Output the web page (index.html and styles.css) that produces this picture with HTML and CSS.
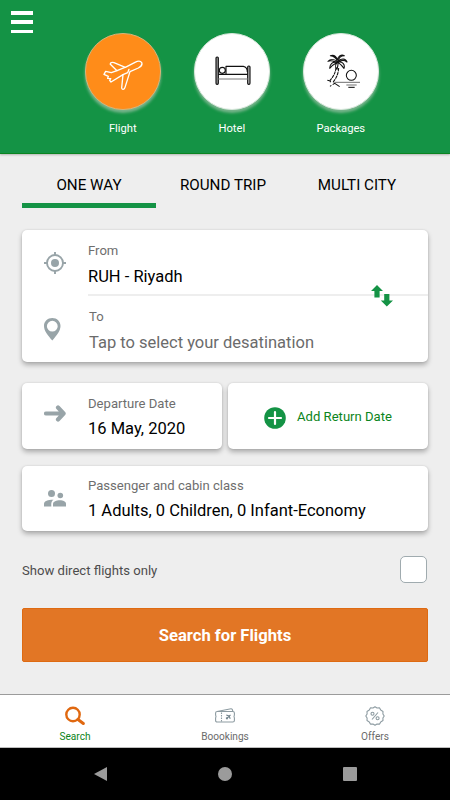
FILE: index.html
```
<!DOCTYPE html>
<html lang="en">
<head>
    <meta charset="UTF-8">
    <meta name="viewport" content="width=device-width, initial-scale=1.0">
    <title>Flight Search</title>
    <link rel="stylesheet" href="styles.css">
</head>
<body>

    <!-- Header with the product types -->
    <header class="header">
        <button class="menu-btn" aria-label="Menu">
            <span></span>
            <span></span>
            <span></span>
        </button>
        <nav class="products">
            <a class="product active">
                <span class="circle">
                    <svg width="40" height="31" viewBox="0 0 120 93" fill="none" stroke="#fff" stroke-width="4" stroke-linejoin="round" stroke-linecap="round">
                        <path d="M96 7 C104 3 113 3 116 8 C119 14 113 20 106 24 L81 35 L66 82 C64 89 57 90 56 84 L60 44 L24 66 L20 61 L23 56 L14 55 L16 49 L3 43 L8 34 L25 38 L42 32 L22 13 C21 8 27 6 33 8 L67 22 Z"/>
                        <path d="M42 32 L66 22 M60 44 L74 38 L78 28"/>
                    </svg>
                </span>
                <span class="product-name">Flight</span>
            </a>
            <a class="product">
                <span class="circle">
                    <svg class="bed" width="36" height="30" viewBox="0 0 108 90" fill="none" stroke="#111" stroke-width="3.4" stroke-linejoin="round">
                        <rect x="3" y="3" width="7" height="82" rx="3" fill="#999"/>
                        <rect x="98" y="30" width="7" height="55" rx="3" fill="#bbb"/>
                        <circle cx="22" cy="43" r="9"/>
                        <path d="M10 55 H98 M33 55 V31 H85 Q97 33 97 48"/>
                        <path d="M10 69 H98" stroke="#888"/>
                    </svg>
                </span>
                <span class="product-name">Hotel</span>
            </a>
            <a class="product">
                <span class="circle">
                    <svg class="palm" width="34" height="34" viewBox="0 0 102 102" fill="none" stroke="#111" stroke-width="3.2" stroke-linejoin="round">
                        <path d="M32 23 C22 15 10 14 3 22 C13 17 20 22 30 25 C17 22 8 31 8 43 C15 35 22 30 31 25 C24 32 25 41 30 46 C32 38 34 32 33 25 C42 31 46 36 51 43 C55 31 45 22 35 24 C45 17 53 18 60 24 C56 12 43 13 34 21 C35 11 42 5 52 5 C43 0 33 6 31 18 C28 8 20 2 10 5 C20 6 28 12 32 23 Z"/>
                        <path d="M27 40 C26 56 19 68 9 79 M35 42 C34 59 28 73 17 86" stroke-dasharray="10 2"/>
                        <path d="M1 79 L11 81 L9 85 M20 86 L38 98 M9 97 L13 94 M17 92 L22 89"/>
                        <circle cx="73" cy="64" r="15"/>
                        <path d="M24 85 H99" stroke="#777"/>
                        <path d="M58 93 H89" stroke="#777"/>
                        <path d="M64 100 H83"/>
                    </svg>
                </span>
                <span class="product-name">Packages</span>
            </a>
        </nav>
    </header>

    <main class="content">
        <!-- Trip type tabs -->
        <div class="tabs">
            <div class="tab active">ONE WAY</div>
            <div class="tab">ROUND TRIP</div>
            <div class="tab">MULTI CITY</div>
        </div>

        <!-- From / To -->
        <div class="card route">
            <div class="field">
                <div class="icon target">
                    <svg width="22" height="22" viewBox="0 0 22 22" fill="none" stroke="#98a4a8" stroke-width="1.9">
                        <circle cx="11" cy="11" r="8"/>
                        <circle cx="11" cy="11" r="4" fill="#98a4a8" stroke="none"/>
                        <path d="M11 0 V3 M11 19 V22 M0 11 H3 M19 11 H22"/>
                    </svg>
                </div>
                <div class="field-text">
                    <div class="label">From</div>
                    <div class="value">RUH - Riyadh</div>
                </div>
            </div>
            <div class="divider"></div>
            <div class="field to">
                <div class="icon">
                    <svg width="17" height="23" viewBox="0 0 17 23">
                        <path fill="#98a4a8" fill-rule="evenodd" d="M8.3 0 C3.6 0 0 3.5 0 8 C0 13 4 17.5 8.3 22.5 C12.6 17.5 16.5 13 16.5 8 C16.5 3.5 13 0 8.3 0 Z M8.3 2.8 A5.4 5.4 0 1 1 8.3 13.6 A5.4 5.4 0 1 1 8.3 2.8 Z"/>
                    </svg>
                </div>
                <div class="field-text">
                    <div class="label">To</div>
                    <div class="value placeholder">Tap to select your desatination</div>
                </div>
            </div>
            <button class="swap" aria-label="Swap">
                <svg width="22" height="22" viewBox="0 0 22 22" fill="#149345">
                    <path d="M6 0 L12 6 H8.6 V12.5 H3.4 V6 H0 Z"/>
                    <path d="M13.2 9 H18.4 V15.5 H22 L15.8 21.5 L9.8 15.5 H13.2 Z"/>
                </svg>
            </button>
        </div>

        <!-- Dates -->
        <div class="dates">
            <div class="card">
                <div class="field">
                    <div class="icon arrow">
                        <svg width="22" height="17" viewBox="0 0 22 17" fill="none" stroke="#98a4a8" stroke-width="4.2" stroke-linecap="round" stroke-linejoin="round">
                            <path d="M2 8.5 H18 M14 2.5 L19.6 8.5 L14 14.5"/>
                        </svg>
                    </div>
                    <div class="field-text">
                        <div class="label">Departure Date</div>
                        <div class="value">16 May, 2020</div>
                    </div>
                </div>
            </div>
            <div class="card add-return">
                <svg width="22" height="22" viewBox="0 0 22 22">
                    <circle cx="11" cy="11" r="10.8" fill="#149345"/>
                    <path d="M11 5 V17 M5 11 H17" stroke="#fff" stroke-width="2.2" stroke-linecap="round"/>
                </svg>
                <span>Add Return Date</span>
            </div>
        </div>

        <!-- Passengers -->
        <div class="card passengers">
            <div class="field">
                <div class="icon">
                    <svg width="22" height="17" viewBox="0 0 22 17" fill="#98a4a8">
                        <circle cx="7.5" cy="3.5" r="3.5"/>
                        <circle cx="16.3" cy="5.5" r="2.8"/>
                        <path d="M0 16.5 V14 C0 11 4.5 9.7 9.5 9.8 C7.5 11.2 7 12.8 7.3 16.5 Z"/>
                        <path d="M9 16.5 V14 C9 11.5 12.5 10.3 15.8 10.3 C19.2 10.3 22 11.6 22 14 V16.5 Z"/>
                    </svg>
                </div>
                <div class="field-text">
                    <div class="label">Passenger and cabin class</div>
                    <div class="value">1 Adults, 0 Children, 0 Infant-Economy</div>
                </div>
            </div>
        </div>

        <label class="direct">
            <span>Show direct flights only</span>
            <input type="checkbox">
        </label>

        <button class="search-btn">Search for Flights</button>
    </main>

    <!-- Bottom tab bar -->
    <nav class="bottom-nav">
        <a class="nav-item active">
            <svg width="20" height="20" viewBox="0 0 20 20" fill="none" stroke="#e06810" stroke-linecap="round">
                <circle cx="8" cy="8.5" r="6.7" stroke-width="2.4"/>
                <path d="M13 13.5 L18.3 17.5" stroke-width="3"/>
            </svg>
            <span>Search</span>
        </a>
        <a class="nav-item">
            <svg width="20" height="20" viewBox="0 0 20 20" fill="none" stroke="#8d9ba1" stroke-width="1.1" stroke-linejoin="round">
                <path d="M2 5.5 L16 2.8 Q17.5 2.6 17.8 5.5"/>
                <path d="M2.2 5.5 H17.8 Q19.4 5.5 19.4 7 V9 Q18.6 10.5 19.4 12 V14.5 Q19.4 16 17.8 16 H2.2 Q.6 16 .6 14.5 V12 Q1.4 10.5 .6 9 V7 Q.6 5.5 2.2 5.5 Z"/>
                <path d="M6.5 6.5 V15.5" stroke-dasharray="1.5 1"/>
                <path d="M11.3 13 L15.5 8.8 M11.3 9 L14.2 10.1 L15.2 12.8 M11 11.6 L12.6 13.2" stroke="#6d7f88"/>
            </svg>
            <span>Boookings</span>
        </a>
        <a class="nav-item">
            <svg width="20" height="20" viewBox="0 0 20 20" fill="none" stroke="#8d9ba1" stroke-width="1.1" stroke-linejoin="round">
                <path d="M10 .8 L12 2 L14.6 1.9 L15.7 4.1 L18 5.4 L17.9 8 L19.2 10 L17.9 12 L18 14.6 L15.7 15.9 L14.6 18.1 L12 18 L10 19.2 L8 18 L5.4 18.1 L4.3 15.9 L2 14.6 L2.1 12 L.8 10 L2.1 8 L2 5.4 L4.3 4.1 L5.4 1.9 L8 2 Z"/>
                <circle cx="7.5" cy="7.7" r="1.5"/>
                <circle cx="12.6" cy="12.3" r="1.5"/>
                <path d="M13 6.5 L7 13.5"/>
            </svg>
            <span>Offers</span>
        </a>
    </nav>

    <!-- System buttons -->
    <div class="system-bar">
        <span><i class="back"></i></span>
        <span><i class="home"></i></span>
        <span><i class="recent"></i></span>
    </div>

</body>
</html>
```

FILE: styles.css
```
* {
    box-sizing: border-box;
}
body {
    font-family: Roboto, 'Liberation Sans', sans-serif;
    margin: 0;
    height: 800px;
    display: flex;
    flex-direction: column;
    background-color: #eeeeee;
    color: #000;
    overflow: hidden;
}
button {
    font-family: inherit;
    border: none;
    padding: 0;
    cursor: pointer;
}
svg {
    display: block;
    flex: none;
}

/* Header */
.header {
    height: 154px;
    flex: none;
    display: flex;
    background-color: #149345;
    border-bottom: 1px solid #0b8420;
    box-shadow: 0 1px 2px rgba(0, 0, 0, 0.25);
}
.menu-btn {
    background: none;
    width: 22px;
    height: 22px;
    margin: 11px 35.3px 0 11px;
    display: flex;
    flex-direction: column;
    justify-content: space-between;
}
.menu-btn span {
    width: 22px;
    height: 3.5px;
    background-color: white;
}
.products {
    display: flex;
    padding-top: 33px;
}
.product {
    width: 109px;
    display: flex;
    flex-direction: column;
    align-items: center;
    color: white;
}
.circle {
    width: 76.5px;
    height: 76.5px;
    border-radius: 50%;
    background-color: white;
    border: 1px solid #d8e8dc;
    box-shadow: 0 3px 3px rgba(175, 200, 180, 0.65);
    display: flex;
    align-items: center;
    justify-content: center;
}
.product.active .circle {
    background-color: #ff8c19;
    border-color: #d5b57b;
    padding-top: 8px;
}
.product .bed {
    margin-left: 3px;
}
.product .palm {
    margin: -1px 0 0 7px;
}
.product-name {
    font-size: 11.2px;
    line-height: 14px;
    margin-top: 12px;
}

/* Trip type tabs */
.content {
    flex: 1;
    padding: 13px 22px 0;
}
.tabs {
    display: flex;
    margin-bottom: 22px;
}
.tab {
    width: 134px;
    height: 41px;
    padding-top: 8px;
    line-height: 20px;
    font-size: 15.2px;
    text-align: center;
    border-bottom: 5px solid transparent;
}
.tab.active {
    border-color: #149345;
}

/* Cards */
.card {
    background-color: white;
    border-radius: 5px;
    box-shadow: 0 3px 5px rgba(0, 0, 0, 0.28), 0 0 2px rgba(0, 0, 0, 0.12);
}
.route {
    position: relative;
    height: 132px;
    margin-bottom: 21px;
}
.field {
    display: flex;
    height: 66px;
}
.icon {
    width: 66px;
    padding-left: 22px;
    display: flex;
    align-items: center;
}
.icon.arrow {
    padding-bottom: 5px;
}
.icon.target {
    padding-top: 2px;
}
.field-text {
    padding-top: 13px;
}
.label {
    font-size: 13.1px;
    line-height: 16px;
    color: #6e6e6e;
}
.value {
    font-size: 16.5px;
    line-height: 20px;
    margin-top: 7px;
}
.placeholder {
    color: #6b6b6b;
}
.route .field {
    height: 64px;
}
.route .value {
    margin-top: 8px;
}
.route .to .field-text {
    padding: 13px 0 0 1px;
}
.route .to .icon {
    padding-top: 2px;
}
.divider {
    height: 2px;
    margin-left: 66px;
    background-color: #eeeeee;
}
/* sits over the divider */
.swap {
    position: absolute;
    right: 35px;
    top: 55px;
    background: none;
}
.dates {
    display: flex;
    gap: 6px;
    margin-bottom: 17px;
}
.dates .card {
    flex: 1;
}
.passengers .field {
    height: 65px;
}
.passengers .field-text {
    padding-top: 12px;
}
.add-return {
    display: flex;
    align-items: center;
    justify-content: center;
    gap: 11px;
    padding-top: 3px;
    font-size: 13.1px;
    color: #0b8420;
}
.add-return span {
    padding-bottom: 3px;
}

/* Direct flights */
.direct {
    display: flex;
    align-items: center;
    justify-content: space-between;
    height: 28px;
    margin: 25px 0 24px;
    font-size: 13.1px;
    color: #4c4c4c;
}
.direct input {
    appearance: none;
    width: 27px;
    height: 27px;
    margin: 0 1px 1px 0;
    background-color: white;
    border: 1px solid #a0abaf;
    border-radius: 5px;
}
.search-btn {
    width: 100%;
    height: 54px;
    background-color: #e27625;
    border: 1px solid #de6a12;
    border-radius: 2px;
    color: white;
    font-size: 16.6px;
    font-weight: bold;
}

/* Bottom tab bar */
.bottom-nav {
    flex: none;
    height: 54px;
    display: flex;
    background-color: white;
    border-top: 1px solid #9b9b9b;
    border-bottom: 1px solid #bdbdbd;
}
.nav-item {
    flex: 1;
    display: flex;
    flex-direction: column;
    align-items: center;
    padding-top: 11px;
    font-size: 10.1px;
    line-height: 12px;
    color: #6b6b6b;
}
.nav-item span {
    margin-top: 5px;
}
.nav-item.active {
    color: #0b8420;
}
.system-bar {
    flex: none;
    height: 52px;
    display: flex;
    justify-content: center;
    background-color: black;
}
.system-bar span {
    width: 124.5px;
    display: flex;
    align-items: center;
    justify-content: center;
}
.system-bar i {
    width: 14px;
    height: 14px;
    background-color: #9b9b9b;
}
.system-bar .back {
    width: 13px;
    clip-path: polygon(0 50%, 100% 0, 100% 100%);
}
.system-bar .home {
    border-radius: 50%;
}
.system-bar .recent {
    border-radius: 1px;
}
```
